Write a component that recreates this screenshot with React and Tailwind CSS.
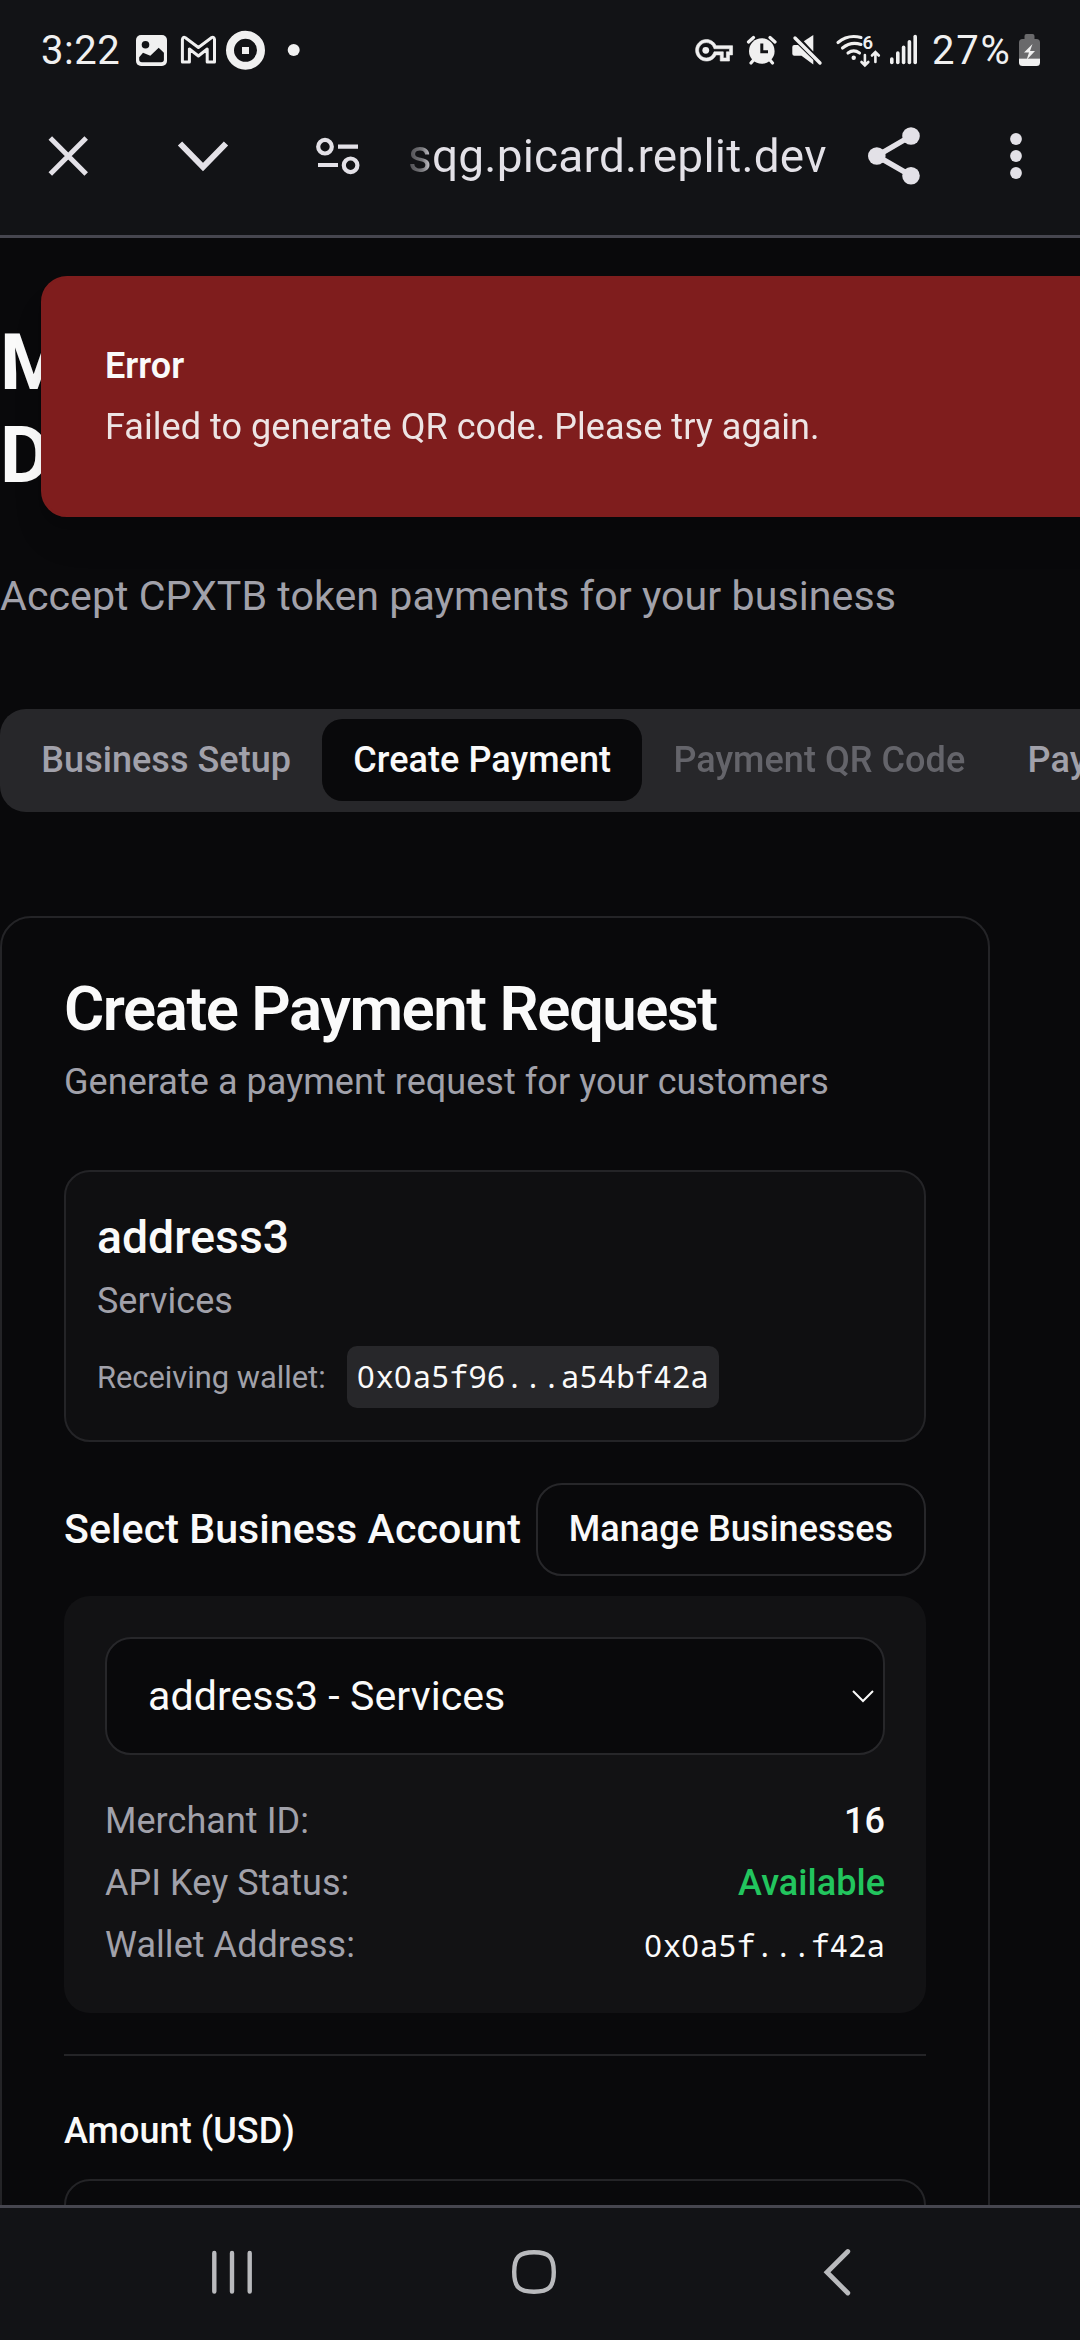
import React from 'react';

const monoText = "font-['Noto_Sans_Mono','DejaVu_Sans_Mono',monospace] tracking-[0px]";

// Monospaced address with plain, undotted zeros.
function Address({ value }) {
  return (
    <span className={monoText}>
      {value.split(/(0)/).map((part, i) =>
        part === '0' ? (
          <span key={i} className="font-['Noto_Sans',sans-serif] tracking-[0.028em]">0</span>
        ) : (
          part
        )
      )}
    </span>
  );
}

function StatusBar() {
  return (
    <div className="flex h-[102px] items-start text-[#f0f0f0]">
      <span className="ml-[41px] mt-[31px] w-[83px] text-[40px] leading-[40px] tracking-[0.5px]">3:22</span>
      <svg className="ml-[10px] mt-[30px]" width="174" height="40" viewBox="134 30 174 40" fill="#f0f0f0">
        <rect x="136" y="35" width="31" height="31" rx="5" />
        <circle cx="145.5" cy="44.7" r="3.8" fill="#121316" />
        <path d="M139.2 57.3 143 52.7 150.3 55.8 158.7 47.7 163.9 52.7V59.5q0 2.7-2.7 2.7H142q-2.8 0-2.8-2.7Z" fill="#121316" />
        <path d="M182.4 62V39.5q.4-3.2 3-1.8L198.4 47.5 211.4 37.7q2.8-1.2 3.1 1.8V62H207.2V49L198.4 56 189.4 49V62Z" fill="none" stroke="#f0f0f0" strokeWidth="3" strokeLinejoin="round" />
        <circle cx="245.5" cy="50.3" r="15.5" fill="none" stroke="#f0f0f0" strokeWidth="8" />
        <rect x="242" y="47" width="7" height="7" />
        <circle cx="293.7" cy="50" r="6" />
      </svg>
      <svg className="ml-[382px] mt-[30px]" width="230" height="40" viewBox="690 30 230 40" fill="#f0f0f0">
        <g transform="translate(695.6 31.8) scale(1.54)">
          <path d="M22 19h-6v-4h-2.68c-1.14 2.42-3.6 4-6.32 4-3.86 0-7-3.14-7-7s3.14-7 7-7c2.72 0 5.17 1.58 6.32 4H24v6h-2v4zm-4-2h2v-4h2v-2H11.94l-.23-.67C11.01 8.34 9.11 7 7 7c-2.76 0-5 2.24-5 5s2.24 5 5 5c2.11 0 4.01-1.34 4.71-3.33l.23-.67H18v4z" stroke="#f0f0f0" strokeWidth="0.4" />
          <circle cx="6.6" cy="12" r="2.2" />
        </g>
        <circle cx="761.8" cy="51" r="12.8" />
        <path d="M748.5 42 753.5 37.5M775 42 770 37.5M751 63 753.5 60M772.5 63 770 60" stroke="#f0f0f0" strokeWidth="3.2" strokeLinecap="round" />
        <path d="M761.8 43.5V51.7H768" fill="none" stroke="#121316" strokeWidth="3" />
        <path d="M813.3 35V51.5L803.8 41.2Z" />
        <path d="M792.3 47q0-2 2-2H798L813.3 60V64.5L801.5 55.8H794.3q-2 0-2-2Z" />
        <path d="M795 38 820 63" stroke="#f0f0f0" strokeWidth="3.4" strokeLinecap="round" />
        <g fill="none" stroke="#f0f0f0" strokeWidth="3.1" strokeLinecap="round">
          <path d="M838 42.500Q848 34 861 37.500M842.500 48Q851 41 861 44.500M848 53Q853.700 48.800 859.500 53" />
          <path d="M864.9 55V65M861.500 62 864.9 65.500 868.300 62M875.400 62V53M872 55.500 875.400 52 878.800 55.500" strokeWidth="2.600" />
        </g>
        <circle cx="853.700" cy="57.700" r="2.200" />
        <text x="862.500" y="48.500" fontSize="18.500" fontWeight="600">6</text>
        <rect x="890" y="57.300" width="3.600" height="7" rx="1.800" />
        <rect x="896" y="51.300" width="3.600" height="13" rx="1.800" />
        <rect x="901.800" y="45.600" width="3.600" height="18.700" rx="1.800" />
        <rect x="907.600" y="39.900" width="3.600" height="24.400" rx="1.800" />
        <rect x="913.400" y="34.700" width="3.600" height="29.600" rx="1.800" />
      </svg>
      <span className="ml-[12px] mt-[31px] w-[86px] text-[40px] leading-[40px] tracking-[1.8px]">27%</span>
      <svg className="mt-[30px]" width="24" height="40" viewBox="1018 30 24 40">
        <path d="M1024.500 39V36q0-2 2-2h6q2 0 2 2v3h2q3.500 0 3.500 3.500V58.500H1019V42.500q0-3.500 3.500-3.500Z" fill="#69696b" />
        <path d="M1019 58.500H1040V62.500q0 3.500-3.500 3.500h-14q-3.500 0-3.500-3.500Z" fill="#f0f0f0" />
        <path d="M1032.500 44 1024 52.500H1029L1026.500 60 1035 51H1030Z" fill="#f0f0f0" />
      </svg>
    </div>
  );
}

function BrowserBar() {
  return (
    <div className="flex h-[133px] items-start">
      <svg className="ml-[40px] mt-[24px]" width="330" height="60" viewBox="40 126 330 60" fill="none" stroke="#e3e1e7" strokeWidth="5">
        <path d="M50.300 138 86.200 174M86.200 138 50.300 174" />
        <path d="M180 143.500 203 167 226 143.500" strokeWidth="6" />
        <circle cx="325" cy="146.700" r="6.800" strokeWidth="4.200" />
        <circle cx="350.600" cy="165.300" r="6.800" strokeWidth="4.200" />
        <path d="M338 146.700H358M318 165H338" strokeWidth="4.200" />
      </svg>
      <span className="ml-[38px] mt-[24px] h-[64px] w-[428px] whitespace-nowrap bg-[linear-gradient(to_right,#4c4c50_0px,#77777b_14px,#e3e1e7_25px)] bg-clip-text text-[46px] leading-[60px] tracking-[0.2px] text-transparent">
        sqg.picard.replit.dev
      </span>
      <svg className="ml-[24px] mt-[24px]" width="180" height="60" viewBox="860 126 180 60" fill="#e3e1e7">
        <circle cx="876.800" cy="156" r="8.800" />
        <circle cx="911" cy="136" r="8.800" />
        <circle cx="911" cy="175.700" r="8.800" />
        <path d="M911 136 876.800 156 911 175.700" fill="none" stroke="#e3e1e7" strokeWidth="5.500" />
        <circle cx="1016" cy="139" r="5.900" />
        <circle cx="1016" cy="156" r="5.900" />
        <circle cx="1016" cy="173" r="5.900" />
      </svg>
    </div>
  );
}

function Toast() {
  return (
    <div className="absolute left-[41px] top-[38px] h-[241px] w-[1100px] rounded-[26px] border-2 border-[#7f1d1d] bg-[#7f1d1d] px-[62px] pt-[63px] text-[36px] leading-[51.4px] text-[#fafafa] shadow-[0_26px_39px_-8px_rgba(0,0,0,0.1),0_10px_15px_-10px_rgba(0,0,0,0.1)]">
      <div className="font-semibold">Error</div>
      <div className="mt-[10px] opacity-90">Failed to generate QR code. Please try again.</div>
    </div>
  );
}

function Tabs() {
  return (
    <div className="mt-[81px] flex h-[103px] w-[1400px] items-center rounded-[26px] bg-[#27272a] p-[10.3px] text-[36px] font-medium leading-[51.4px] text-[#a1a1aa]">
      <div className="px-[31px] pt-px">Business Setup</div>
      <div className="flex h-[82px] items-center rounded-[20.500px] bg-[#09090b] px-[31.2px] pt-px text-[#fafafa]">Create Payment</div>
      <div className="px-[31.2px] pt-px opacity-50">Payment QR Code</div>
      <div className="px-[31.2px] pt-px">Payment History</div>
    </div>
  );
}

function MerchantSummary() {
  return (
    <div className="mt-[62px] h-[272px] rounded-[26px] border-2 border-[#242427] bg-[#0f0f11] px-[30.9px] pt-[29px]">
      <div className="text-[46.3px] font-medium leading-[72px]">address3</div>
      <div className="mt-[3px] text-[36px] leading-[51.4px] text-[#a1a1aa]">Services</div>
      <div className="mt-[19px] flex items-center text-[30.86px]">
        <span className="leading-[41px] tracking-[0px] text-[#a1a1aa]">Receiving wallet:</span>
        <code className="ml-[21px] h-[62px] rounded-[10px] bg-[#27272a] px-[10.3px] leading-[60px]">
          <Address value="0x0a5f96...a54bf42a" />
        </code>
      </div>
    </div>
  );
}

function AccountPanel() {
  return (
    <div className="mt-[20px] h-[417px] rounded-[26px] bg-[#121214] px-[41px] pt-[41px]">
      <div className="flex h-[118px] items-center justify-between rounded-[26px] border-2 border-[#27272a] bg-[#09090b] pl-[41px] pr-[8px] text-[41.14px] leading-[61.7px]">
        <span className="pt-px">address3 - Services</span>
        <svg width="24" height="14" viewBox="0 0 24 14" fill="none" stroke="#fafafa" strokeWidth="2">
          <path d="M2 2 12 12 22 2" />
        </svg>
      </div>
      <div className="mt-[41px] flex flex-col gap-[10.200px] text-[36px] leading-[51.4px]">
        <div className="flex justify-between">
          <span className="text-[#a1a1aa]">Merchant ID:</span>
          <span className="font-medium">16</span>
        </div>
        <div className="flex justify-between">
          <span className="text-[#a1a1aa]">API Key Status:</span>
          <span className="font-medium text-[#22c55e]">Available</span>
        </div>
        <div className="flex items-center justify-between pt-px">
          <span className="text-[#a1a1aa]">Wallet Address:</span>
          <span className="text-[30.86px] leading-[51px]">
            <Address value="0x0a5f...f42a" />
          </span>
        </div>
      </div>
    </div>
  );
}

function PaymentCard() {
  return (
    <section className="mt-[104px] h-[1500px] w-[990px] rounded-[31px] border-2 border-[#242427] px-[62px] pt-[61px] text-[#fafafa]">
      <h2 className="text-[61.7px] font-semibold leading-[61.7px] tracking-[-1.46px]">Create Payment Request</h2>
      <p className="mt-[16px] text-[36px] leading-[51.4px] text-[#a1a1aa]">Generate a payment request for your customers</p>
      <MerchantSummary />
      <div className="mt-[41px] flex items-center justify-between">
        <span className="text-[41.14px] font-medium leading-[61.7px]">Select Business Account</span>
        <button className="h-[93px] rounded-[26px] border-2 border-[#27272a] px-[30.9px] text-[36px] font-medium leading-[51.4px]">
          Manage Businesses
        </button>
      </div>
      <AccountPanel />
      <hr className="mt-[41px] border-t-2 border-[#242427]" />
      <label className="mt-[57px] block h-[36px] text-[36px] font-medium leading-[36px]">Amount (USD)</label>
      <div className="mt-[30px] h-[103px] rounded-[26px] border-2 border-[#242427]" />
    </section>
  );
}

function SystemNav() {
  return (
    <footer className="h-[135px] border-t-[3px] border-[#46464f] bg-[#121316]">
      <svg width="1080" height="132" viewBox="0 2208 1080 132" fill="none" stroke="#b9babd" strokeWidth="4.400" strokeLinecap="round">
        <path d="M214.300 2253V2291.500M232 2253V2291.500M249.700 2253V2291.500" />
        <path d="M534 2252.200C549 2252.200 553.800 2257 553.800 2272S549 2291.800 534 2291.800 514.200 2287 514.200 2272 519 2252.200 534 2252.200Z" />
        <path d="M847.800 2251.500 827 2272.200 847.800 2293" strokeWidth="4.800" />
      </svg>
    </footer>
  );
}

export default function App() {
  return (
    <div className="flex h-[2340px] w-[1080px] flex-col overflow-hidden bg-[#09090b] font-[Roboto,sans-serif] tracking-[0.05px]">
      <header className="h-[238px] shrink-0 border-b-[3px] border-[#46464f] bg-[#121316]">
        <StatusBar />
        <BrowserBar />
      </header>
      <main className="relative h-[1967px] shrink-0 overflow-hidden pt-[79px]">
        <h1 className="text-[77.1px] font-bold leading-[92.6px] text-[#fafafa]">
          Merchant
          <br />
          Dashboard
        </h1>
        <p className="mt-[64px] text-[41.14px] leading-[61.7px] text-[#a1a1aa]">Accept CPXTB token payments for your business</p>
        <Tabs />
        <PaymentCard />
        <Toast />
      </main>
      <SystemNav />
    </div>
  );
}
